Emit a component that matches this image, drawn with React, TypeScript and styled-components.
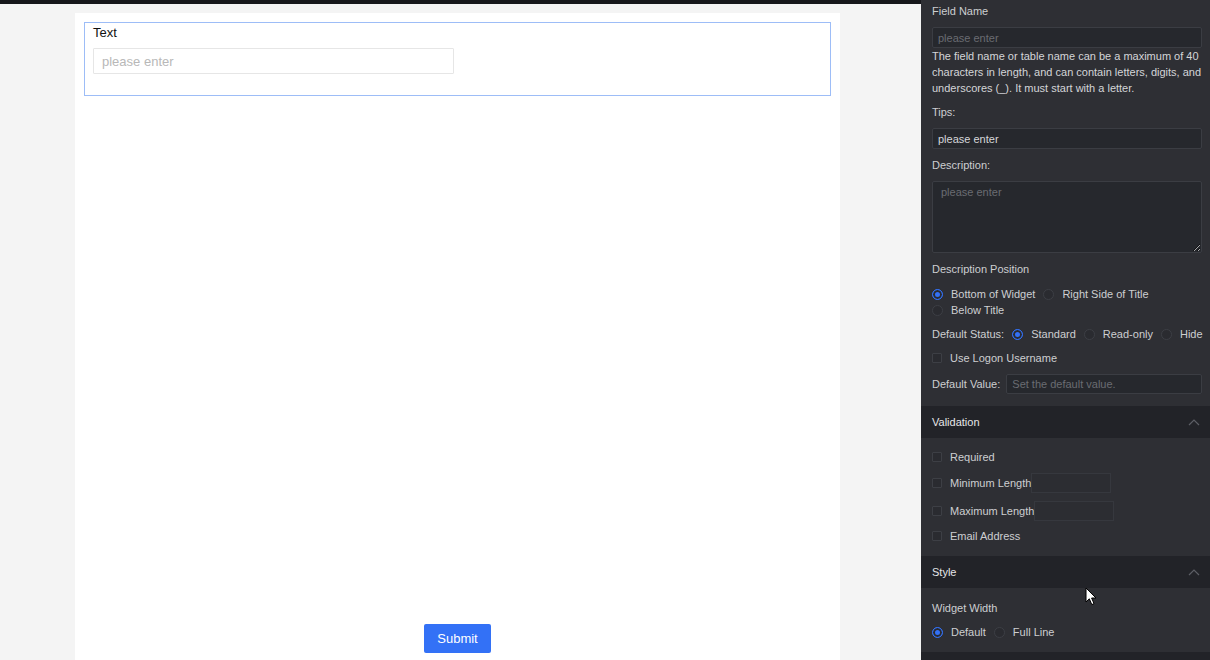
import React from 'react';
import styled, { createGlobalStyle } from 'styled-components';

const GlobalStyle = createGlobalStyle`
  html, body {
    margin: 0;
    padding: 0;
    width: 1210px;
    height: 660px;
    overflow: hidden;
    font-family: "Liberation Sans", Arial, sans-serif;
  }
  * {
    box-sizing: border-box;
  }
`;

type RadioOption = { label: string; checked?: boolean };

function RadioGroup({ options }: { options: RadioOption[] }) {
  return (
    <>
      {options.map((o) => (
        <RadioItem key={o.label}>
          <RadioDot $checked={!!o.checked} />
          {o.label}
        </RadioItem>
      ))}
    </>
  );
}

function Chevron() {
  return (
    <svg width="12" height="8" viewBox="0 0 12 8">
      <path d="M1 7 L6 2 L11 7" fill="none" stroke="#5d5f66" strokeWidth="1.2" />
    </svg>
  );
}

function App() {
  return (
    <>
      <GlobalStyle />
      <Page>
        <Workspace>
          <TopStrip />
          <Canvas>
            <WidgetBox>
              <WidgetLabel>Text</WidgetLabel>
              <WidgetInput placeholder="please enter" />
            </WidgetBox>
            <CanvasFooter>
              <SubmitButton>Submit</SubmitButton>
            </CanvasFooter>
          </Canvas>
        </Workspace>

        <Panel>
          <SectionBody $pt={3}>
            <FieldLabel>Field Name</FieldLabel>
            <div>
              <DarkInput placeholder="please enter" />
              <HelpText>
                The field name or table name can be a maximum of 40 characters in length, and can
                contain letters, digits, and underscores (_). It must start with a letter.
              </HelpText>
            </div>
            <FieldLabel>Tips:</FieldLabel>
            <DarkInput defaultValue="please enter" />
            <FieldLabel>Description:</FieldLabel>
            <DarkTextarea placeholder="please enter" />
            <FieldLabel>Description Position</FieldLabel>
            <RadioWrap>
              <RadioGroup
                options={[
                  { label: 'Bottom of Widget', checked: true },
                  { label: 'Right Side of Title' },
                  { label: 'Below Title' },
                ]}
              />
            </RadioWrap>
            <InlineRow>
              <FieldLabel>Default Status:</FieldLabel>
              <RadioGroup
                options={[
                  { label: 'Standard', checked: true },
                  { label: 'Read-only' },
                  { label: 'Hide' },
                ]}
              />
            </InlineRow>
            <CheckItem>
              <CheckBox />
              Use Logon Username
            </CheckItem>
            <InlineRow $gap={6}>
              <FieldLabel>Default Value:</FieldLabel>
              <DarkInput placeholder="Set the default value." $flex />
            </InlineRow>
          </SectionBody>

          <SectionHeader>
            Validation
            <Chevron />
          </SectionHeader>
          <SectionBody $pt={11}>
            <CheckItem>
              <CheckBox />
              Required
            </CheckItem>
            <CheckItem>
              <CheckBox />
              Minimum Length
              <SmallInput />
            </CheckItem>
            <CheckItem>
              <CheckBox />
              Maximum Length
              <SmallInput />
            </CheckItem>
            <CheckItem $shift={-1}>
              <CheckBox />
              Email Address
            </CheckItem>
          </SectionBody>

          <SectionHeader>
            Style
            <Chevron />
          </SectionHeader>
          <SectionBody $pt={12}>
            <FieldLabel>Widget Width</FieldLabel>
            <InlineRow>
              <RadioGroup options={[{ label: 'Default', checked: true }, { label: 'Full Line' }]} />
            </InlineRow>
          </SectionBody>
          <SectionHeader />

          <Cursor width="13" height="19" viewBox="0 0 13 19">
            <path
              d="M1 1 L1 15 L4.3 11.8 L6.8 17.6 L9 16.6 L6.6 11 L11 11 Z"
              fill="#ffffff"
              stroke="#000000"
              strokeWidth="1"
              strokeLinejoin="round"
            />
          </Cursor>
        </Panel>
      </Page>
    </>
  );
}

export default App;

const Page = styled.div`
  display: flex;
  width: 1210px;
  height: 660px;
  overflow: hidden;
`;

const Workspace = styled.div`
  width: 921px;
  height: 660px;
  background: #f4f4f4;
  display: flex;
  flex-direction: column;
`;

const TopStrip = styled.div`
  height: 4px;
  background: #16171b;
  flex-shrink: 0;
`;

const Canvas = styled.div`
  margin: 9px 0 0 75px;
  width: 765px;
  flex: 1;
  background: #ffffff;
  padding: 9px 9px 0 9px;
  display: flex;
  flex-direction: column;
`;

const WidgetBox = styled.div`
  height: 74px;
  border: 1px solid #9dbdf7;
  padding: 1px 8px 0 8px;
`;

const WidgetLabel = styled.div`
  font-size: 13px;
  line-height: 18px;
  color: #111111;
`;

const WidgetInput = styled.input`
  display: block;
  margin-top: 6px;
  width: 361px;
  height: 26px;
  border: 1px solid #e6e6e6;
  border-radius: 1px;
  padding: 0 8px;
  font-family: inherit;
  font-size: 13px;
  color: #333;
  outline: none;
  &::placeholder {
    color: #b8b8b8;
  }
`;

const CanvasFooter = styled.div`
  margin-top: auto;
  display: flex;
  justify-content: center;
  padding-bottom: 7px;
`;

const SubmitButton = styled.button`
  width: 67px;
  height: 29px;
  border: none;
  border-radius: 2px;
  background: #3371f6;
  color: #ffffff;
  font-family: inherit;
  font-size: 13px;
`;

const Panel = styled.div`
  position: relative;
  width: 289px;
  height: 660px;
  background: #2e2f34;
  color: #cdced1;
  font-size: 11px;
  overflow: hidden;
`;

const SectionBody = styled.div<{ $pt: number }>`
  display: flex;
  flex-direction: column;
  gap: 8px;
  padding: ${(p) => p.$pt}px 8px 12px 11px;
`;

const SectionHeader = styled.div`
  height: 32px;
  background: #222328;
  display: flex;
  align-items: center;
  justify-content: space-between;
  padding: 0 10px 0 11px;
  color: #e6e7e9;
  font-size: 11px;
`;

const FieldLabel = styled.div`
  line-height: 16px;
  white-space: nowrap;
`;

const HelpText = styled.div`
  line-height: 16px;
  color: #d4d5d8;
`;

const DarkInput = styled.input<{ $flex?: boolean }>`
  display: block;
  width: 100%;
  ${(p) => (p.$flex ? 'flex: 1; width: auto; min-width: 0; height: 20px;' : 'height: 21px;')}
  background: #26282d;
  border: 1px solid #3b3d43;
  border-radius: 2px;
  padding: 0 5px;
  font-family: inherit;
  font-size: 11px;
  color: #d6d7da;
  outline: none;
  &::placeholder {
    color: #6a6c72;
  }
`;

const DarkTextarea = styled.textarea`
  display: block;
  width: 100%;
  height: 72px;
  background: #26282d;
  border: 1px solid #3b3d43;
  border-radius: 2px;
  padding: 4px 8px;
  font-family: inherit;
  font-size: 11px;
  color: #d6d7da;
  resize: vertical;
  outline: none;
  &::placeholder {
    color: #6a6c72;
  }
`;

const RadioWrap = styled.div`
  display: flex;
  flex-wrap: wrap;
  column-gap: 8px;
  width: 220px;
  margin-top: 1px;
`;

const InlineRow = styled.div<{ $gap?: number }>`
  display: flex;
  align-items: center;
  gap: ${(p) => p.$gap ?? 8}px;
  min-height: 16px;
`;

const RadioItem = styled.label`
  display: inline-flex;
  align-items: center;
  gap: 8px;
  line-height: 16px;
  white-space: nowrap;
`;

const RadioDot = styled.span<{ $checked: boolean }>`
  width: 11px;
  height: 11px;
  border-radius: 50%;
  border: 1px solid ${(p) => (p.$checked ? '#3371f6' : '#3d3f45')};
  background: ${(p) => (p.$checked ? '#3371f6' : '#2a2b30')};
  box-shadow: ${(p) => (p.$checked ? 'inset 0 0 0 2px #2a2b30' : 'none')};
  flex-shrink: 0;
`;

const CheckItem = styled.label<{ $shift?: number }>`
  display: flex;
  align-items: center;
  gap: 8px;
  line-height: 16px;
  margin-top: ${(p) => p.$shift ?? 0}px;
`;

const CheckBox = styled.span`
  width: 10px;
  height: 10px;
  border: 1px solid #3d3f45;
  border-radius: 1px;
  background: #2a2b30;
  flex-shrink: 0;
`;

const SmallInput = styled.span`
  width: 80px;
  height: 20px;
  margin-left: -8px;
  border: 1px solid #36383e;
  background: #2c2d32;
`;

const Cursor = styled.svg`
  position: absolute;
  left: 164px;
  top: 587px;
`;
